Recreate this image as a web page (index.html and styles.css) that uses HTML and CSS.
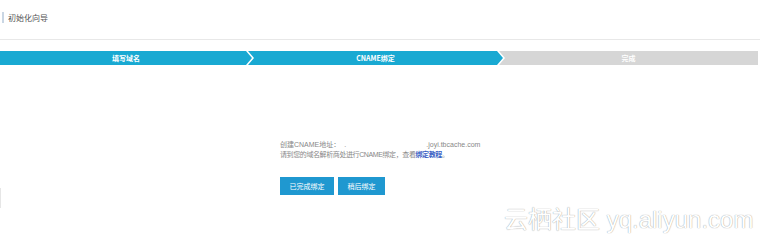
FILE: index.html
```html
<!DOCTYPE html>
<html lang="zh-CN">
<head>
<meta charset="utf-8">
<title>初始化向导</title>
<link rel="stylesheet" href="styles.css">
</head>
<body>
<div class="page">
  <div class="header">
    <h1 class="title">初始化向导</h1>
  </div>
  <div class="steps">
    <div class="step step-first active">填写域名</div>
    <div class="step step-mid active">CNAME绑定</div>
    <div class="step step-last">完成</div>
  </div>
  <div class="content">
    <p class="line">创建CNAME地址：<span class="redacted">.</span>.joyi.tbcache.com</p>
    <p class="line line-tight">请到您的域名解析商处进行CNAME绑定，查看<a class="link" href="#">绑定教程</a>。</p>
    <div class="actions">
      <button class="btn btn-done">已完成绑定</button>
      <button class="btn btn-later">稍后绑定</button>
    </div>
  </div>
  <div class="edge-mark"></div>
  <div class="watermark"><span class="wm-cn">云栖社区</span> yq.aliyun.com</div>
</div>
</body>
</html>
```

FILE: styles.css
```css
html, body {
  margin: 0;
  padding: 0;
  background: #ffffff;
}
body {
  font-family: "Liberation Sans", "Noto Sans CJK SC", sans-serif;
  color: #555;
}
.page {
  position: relative;
  width: 768px;
  height: 242px;
  overflow: hidden;
}
.header {
  width: 760px;
  height: 40px;
  border-bottom: 1px solid #e8e8e8;
  padding-top: 12px;
  box-sizing: border-box;
}
.title {
  margin: 0 0 0 2px;
  padding-left: 4px;
  border-left: 2px solid #c9d6e4;
  font-size: 8px;
  line-height: 11px;
  font-weight: normal;
  color: #555;
  font-family: "Noto Sans CJK SC", sans-serif;
}
.steps {
  display: flex;
  margin-top: 11px;
  height: 14px;
  width: 758px;
}
.step {
  height: 14px;
  line-height: 14px;
  font-size: 7px;
  font-weight: bold;
  color: #fff;
  text-align: center;
  font-family: "Noto Sans CJK SC", sans-serif;
  background: #d6d6d6;
}
.step.active {
  background: #19a9d2;
}
.step-first {
  width: 252px;
  clip-path: polygon(0 0, calc(100% - 6px) 0, 100% 50%, calc(100% - 6px) 100%, 0 100%);
}
.step-mid {
  width: 255px;
  margin-left: -4px;
  clip-path: polygon(0 0, calc(100% - 6px) 0, 100% 50%, calc(100% - 6px) 100%, 0 100%, 6px 50%);
}
.step-last {
  width: 259px;
  margin-left: -4px;
  clip-path: polygon(0 0, 100% 0, 100% 100%, 0 100%, 6px 50%);
}
.content {
  padding-left: 280px;
  margin-top: 75px;
}
.line {
  margin: 0;
  font-size: 7px;
  line-height: 10px;
  color: #888;
  white-space: nowrap;
  font-family: "Liberation Sans", "Noto Sans CJK SC", sans-serif;
}
.line-tight {
  letter-spacing: -0.4px;
}
.redacted {
  display: inline-block;
  padding-left: 4px;
  width: 82px;
}
.link {
  color: #3a5fc4;
  font-weight: bold;
  text-decoration: none;
}
.actions {
  display: flex;
  gap: 4px;
  margin-top: 17px;
}
.btn {
  height: 18px;
  border: none;
  padding: 0;
  margin: 0;
  background: #1f98d0;
  color: #fff;
  font-size: 7px;
  font-family: "Noto Sans CJK SC", sans-serif;
  cursor: pointer;
}
.btn-done {
  width: 54px;
}
.btn-later {
  width: 47px;
}
.edge-mark {
  position: absolute;
  left: 0;
  top: 188px;
  width: 1px;
  height: 20px;
  background: #e6e6e6;
}
.watermark {
  position: absolute;
  left: 504px;
  top: 204px;
  font-size: 24px;
  line-height: 28px;
  color: #ffffff;
  white-space: nowrap;
  font-family: "Liberation Sans", sans-serif;
  text-shadow: 0 0 1px rgba(0, 0, 0, 0.35), 0 0 1px rgba(0, 0, 0, 0.2);
}
.wm-cn {
  font-family: "Noto Sans CJK SC", sans-serif;
}
```
